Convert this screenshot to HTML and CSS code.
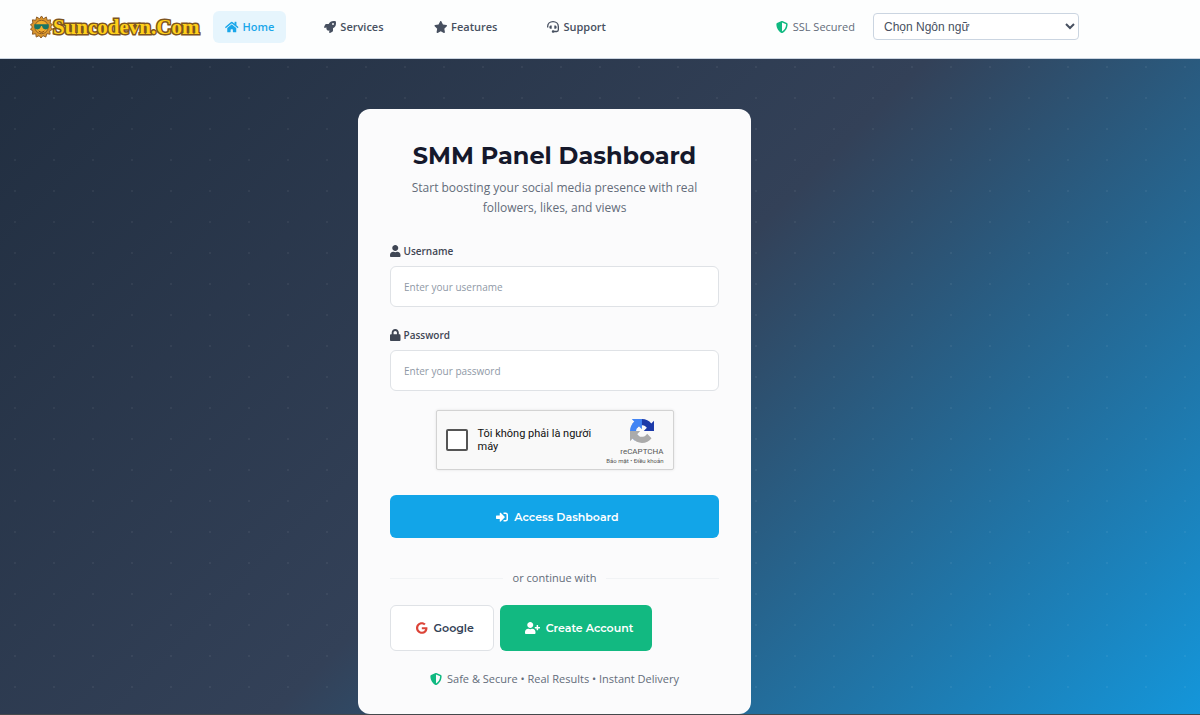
FILE: index.html
```html
<!DOCTYPE html>
<html lang="vi">
<head>
  <meta charset="UTF-8">
  <meta name="viewport" content="width=device-width, initial-scale=1.0">
  <title>SMM Panel Dashboard</title>
  <link rel="stylesheet" href="styles.css">
</head>
<body>
  <header class="header">
    <a class="logo" href="#">
      <svg class="logo-sun" viewBox="0 0 48 48" aria-hidden="true">
        <path d="M24 1l4 6 6-4 2 7 7-1-1 7 5 3-4 5 4 5-6 3 1 7-7-1-2 7-6-3-4 5-4-5-6 3-1-7-7 1 1-7-5-3 4-5-4-5 5-3-1-7 7 1 2-7 6 4z" fill="#d9952c" stroke="#8a5a26" stroke-width="2"/>
        <circle cx="24" cy="24" r="14" fill="#f3ae2d" stroke="#8a5a26" stroke-width="2"/>
        <path d="M9 18h30v5c0 4-3 6-7 6s-6-3-7-7h-2c-1 4-3 7-7 7s-7-2-7-6z" fill="#187565"/>
        <path d="M18 32c4 4 9 4 12 0" fill="none" stroke="#7a3c12" stroke-width="2"/>
      </svg>
      <span class="logo-text">Suncodevn.Com</span>
    </a>
    <nav class="nav">
      <a class="nav-link active" href="#">
        <svg class="icon" viewBox="0 0 576 512"><path d="M280.37 148.26L96 300.11V464a16 16 0 0 0 16 16l112.06-.29a16 16 0 0 0 15.92-16V368a16 16 0 0 1 16-16h64a16 16 0 0 1 16 16v95.64a16 16 0 0 0 16 16.05L464 480a16 16 0 0 0 16-16V300L295.67 148.26a12.19 12.19 0 0 0-15.3 0zM571.6 251.47L488 182.56V44.05a12 12 0 0 0-12-12h-56a12 12 0 0 0-12 12v72.61L318.47 43a48 48 0 0 0-61 0L4.34 251.47a12 12 0 0 0-1.6 16.9l25.5 31A12 12 0 0 0 45.15 301l235.22-193.74a12.19 12.19 0 0 1 15.3 0L530.9 301a12 12 0 0 0 16.9-1.6l25.5-31a12 12 0 0 0-1.7-16.93z"/></svg>
        Home
      </a>
      <a class="nav-link" href="#">
        <svg class="icon" viewBox="0 0 512 512"><path d="M505.1 19.1c-1.2-5.5-6.7-11-12.2-12.2C460.7 0 435.5 0 410.4 0 307.2 0 245.3 55.2 199.1 128H94.8c-16.3 0-35.6 11.9-42.9 26.5L2.5 253.3A28.4 28.4 0 0 0 0 264a24 24 0 0 0 24 24h103.8l-22.5 22.5c-11.4 11.4-13 32.3 0 45.3l50.9 50.9c11.2 11.2 32.2 13.2 45.3 0l22.5-22.5V488a24 24 0 0 0 24 24 28.6 28.6 0 0 0 10.7-2.5l98.7-49.4c14.6-7.3 26.5-26.5 26.5-42.9V312.8c72.6-46.3 128-108.4 128-211.1 0-25.2 0-50.4-6.8-82.6zM384 168a40 40 0 1 1 40-40 40 40 0 0 1-40 40z"/></svg>
        Services
      </a>
      <a class="nav-link" href="#">
        <svg class="icon" viewBox="0 0 576 512"><path d="M259.3 17.8L194 150.2 47.9 171.5c-26.2 3.8-36.7 36.1-17.7 54.6l105.7 103-25 145.5c-4.5 26.3 23.2 46 46.4 33.7L288 439.6l130.7 68.7c23.2 12.2 50.9-7.4 46.4-33.7l-25-145.5 105.7-103c19-18.5 8.5-50.8-17.7-54.6L382 150.2 316.7 17.8c-11.7-23.6-45.6-23.9-57.4 0z"/></svg>
        Features
      </a>
      <a class="nav-link" href="#">
        <svg class="icon" viewBox="0 0 512 512"><path d="M28 280v-40C28 120 128 28 256 28s228 92 228 212v136c0 44-30 72-70 72H280" fill="none" stroke="currentColor" stroke-width="56"/><path d="M200 190h-25c-45 0-75 28-75 72s30 72 75 72h25zM312 190h25c45 0 75 28 75 72s-30 72-75 72h-25z"/><rect x="205" y="396" width="110" height="108" rx="48"/></svg>
        Support
      </a>
    </nav>
    <div class="header-right">
      <span class="ssl">
        <svg class="icon green" viewBox="0 0 512 512"><path d="M466.5 83.7l-192-80a48.15 48.15 0 0 0-36.9 0l-192 80C27.7 91.1 16 108.6 16 128c0 198.5 114.5 335.7 221.5 380.3 11.8 4.9 25.1 4.9 36.9 0C360.1 472.6 496 349.3 496 128c0-19.4-11.7-36.9-29.5-44.3zM256.1 446.3l-.1-381 175.9 73.3c-3.3 151.4-82.1 261.1-175.8 307.7z"/></svg>
        SSL Secured
      </span>
      <select class="language" aria-label="Chọn Ngôn ngữ">
        <option>Chọn Ngôn ngữ</option>
      </select>
    </div>
  </header>

  <main class="hero">
    <form class="card">
      <h1 class="title">SMM Panel Dashboard</h1>
      <p class="subtitle">Start boosting your social media presence with real followers, likes, and views</p>

      <div class="form-group">
        <label for="username">
          <svg class="icon" viewBox="0 0 448 512"><path d="M224 256c70.7 0 128-57.3 128-128S294.7 0 224 0 96 57.3 96 128s57.3 128 128 128zm89.6 32h-16.7c-22.2 10.2-46.9 16-72.9 16s-50.6-5.8-72.9-16h-16.7C60.2 288 0 348.2 0 422.4V464c0 26.5 21.5 48 48 48h352c26.5 0 48-21.5 48-48v-41.6c0-74.2-60.2-134.4-134.4-134.4z"/></svg>
          Username
        </label>
        <input type="text" id="username" placeholder="Enter your username">
      </div>

      <div class="form-group">
        <label for="password">
          <svg class="icon" viewBox="0 0 448 512"><path d="M400 224h-24v-72C376 68.2 307.8 0 224 0S72 68.2 72 152v72H48c-26.5 0-48 21.5-48 48v192c0 26.5 21.5 48 48 48h352c26.5 0 48-21.5 48-48V272c0-26.5-21.5-48-48-48zm-104 0H152v-72c0-39.7 32.3-72 72-72s72 32.3 72 72v72z"/></svg>
          Password
        </label>
        <input type="password" id="password" placeholder="Enter your password">
      </div>

      <div class="captcha">
        <input type="checkbox" id="robot">
        <label for="robot">Tôi không phải là người máy</label>
        <div class="captcha-brand">
          <svg class="captcha-logo" viewBox="0 0 64 64" aria-hidden="true">
            <path fill="#1c3aa9" d="M64 31.955l-.033-1.37V4.687l-7.16 7.16C50.948 4.674 42.033.093 32.05.093c-10.4 0-19.622 4.96-25.458 12.64l11.736 11.86a15.55 15.55 0 0 1 4.754-5.334c2.05-1.6 4.952-2.906 8.968-2.906.485 0 .86.057 1.135.163 4.976.393 9.288 3.14 11.828 7.124l-8.307 8.307L64 31.953"/>
            <path fill="#4285f4" d="M31.862.094l-1.37.033H4.594l7.16 7.16C4.58 13.147 0 22.06 0 32.046c0 10.4 4.96 19.622 12.64 25.458L24.5 45.768a15.55 15.55 0 0 1-5.334-4.754c-1.6-2.05-2.906-4.952-2.906-8.968 0-.485.057-.86.163-1.135.393-4.976 3.14-9.288 7.124-11.828l8.307 8.307L31.86.095"/>
            <path fill="#ababab" d="M.001 32.045l.033 1.37v25.898l7.16-7.16c5.86 7.173 14.774 11.754 24.76 11.754 10.4 0 19.622-4.96 25.458-12.64l-11.736-11.86a15.55 15.55 0 0 1-4.754 5.334c-2.05 1.6-4.952 2.906-8.968 2.906-.485 0-.86-.057-1.135-.163-4.976-.393-9.288-3.14-11.828-7.124l8.307-8.307c-10.522.04-22.4.066-27.295-.005"/>
          </svg>
          <span class="captcha-name">reCAPTCHA</span>
          <span class="captcha-links"><a href="#">Bảo mật</a> • <a href="#">Điều khoản</a></span>
        </div>
      </div>

      <button class="btn btn-primary" type="submit">
        <svg class="icon" viewBox="0 0 512 512"><path d="M416 448h-84c-6.6 0-12-5.4-12-12v-40c0-6.6 5.4-12 12-12h84c17.7 0 32-14.3 32-32V160c0-17.7-14.3-32-32-32h-84c-6.6 0-12-5.4-12-12V76c0-6.6 5.4-12 12-12h84c53 0 96 43 96 96v192c0 53-43 96-96 96zm-47-201L201 79c-15-15-41-4.5-41 17v96H24c-13.3 0-24 10.7-24 24v96c0 13.3 10.7 24 24 24h136v96c0 21.5 26 32 41 17l168-168c9.3-9.4 9.3-24.6 0-34z"/></svg>
        Access Dashboard
      </button>

      <div class="divider">or continue with</div>

      <div class="actions">
        <button class="btn btn-google" type="button">
          <svg class="icon" viewBox="0 0 488 512"><path d="M488 261.8C488 403.3 391.1 504 248 504 110.8 504 0 393.2 0 256S110.8 8 248 8c66.8 0 123 24.5 166.3 64.9l-67.5 64.9C258.5 52.6 94.3 116.6 94.3 256c0 86.5 69.1 156.6 153.7 156.6 98.2 0 135-70.4 140.8-106.9H248v-85.3h236.1c2.3 12.7 3.9 24.9 3.9 41.4z"/></svg>
          Google
        </button>
        <button class="btn btn-create" type="button">
          <svg class="icon" viewBox="0 0 640 512"><path d="M624 208h-64v-64c0-8.8-7.2-16-16-16h-32c-8.8 0-16 7.2-16 16v64h-64c-8.8 0-16 7.2-16 16v32c0 8.8 7.2 16 16 16h64v64c0 8.8 7.2 16 16 16h32c8.8 0 16-7.2 16-16v-64h64c8.8 0 16-7.2 16-16v-32c0-8.8-7.2-16-16-16zm-400 48c70.7 0 128-57.3 128-128S294.7 0 224 0 96 57.3 96 128s57.3 128 128 128zm89.6 32h-16.7c-22.2 10.2-46.9 16-72.9 16s-50.6-5.8-72.9-16h-16.7C60.2 288 0 348.2 0 422.4V464c0 26.5 21.5 48 48 48h352c26.5 0 48-21.5 48-48v-41.6c0-74.2-60.2-134.4-134.4-134.4z"/></svg>
          Create Account
        </button>
      </div>

      <p class="trust">
        <svg class="icon green" viewBox="0 0 512 512"><path d="M466.5 83.7l-192-80a48.15 48.15 0 0 0-36.9 0l-192 80C27.7 91.1 16 108.6 16 128c0 198.5 114.5 335.7 221.5 380.3 11.8 4.9 25.1 4.9 36.9 0C360.1 472.6 496 349.3 496 128c0-19.4-11.7-36.9-29.5-44.3zM256.1 446.3l-.1-381 175.9 73.3c-3.3 151.4-82.1 261.1-175.8 307.7z"/></svg>
        Safe &amp; Secure • Real Results • Instant Delivery
      </p>
    </form>
  </main>
</body>
</html>
```
FILE: styles.css
```css
* {
  box-sizing: border-box;
}

body {
  margin: 0;
  min-height: 100vh;
  display: flex;
  flex-direction: column;
  font-family: "Open Sans", sans-serif;
  font-size: 11px;
  color: #636c7a;
}

a {
  color: inherit;
  text-decoration: none;
}

.icon {
  height: 12px;
  fill: currentColor;
  flex: none;
}

.green {
  color: #10b981;
}

/* header */
.header {
  display: flex;
  align-items: center;
  height: 59px;
  padding: 0 121px 5px 30px;
  background: #fdfefe;
  border-bottom: 1px solid #cbd5e1;
}

.logo {
  display: flex;
  align-items: center;
  width: 170px;
  margin-right: 13px;
}

.logo-sun {
  width: 23px;
  height: 24px;
  flex: none;
}

.logo-text {
  font-family: "Liberation Serif", serif;
  font-size: 21px;
  font-weight: bold;
  line-height: 24px;
  color: #ffd01a;
  -webkit-text-stroke: 3px #7d551f;
  paint-order: stroke fill;
}

.nav {
  display: flex;
  gap: 26px;
}

.nav-link {
  display: flex;
  align-items: center;
  gap: 4px;
  height: 32px;
  padding: 0 12px;
  border-radius: 6px;
  font-weight: 600;
  color: #475060;
}

.nav-link.active {
  background: #e6f5fd;
  color: #1aa7ea;
}

.header-right {
  display: flex;
  align-items: center;
  gap: 18px;
  margin-left: auto;
}

.ssl {
  display: flex;
  align-items: center;
  gap: 5px;
}

.language {
  width: 206px;
  height: 27px;
  padding: 0 6px;
  border: 1px solid #cbd5e1;
  border-radius: 4px;
  background: #fff;
  color: #475060;
  font-family: "Liberation Sans", sans-serif;
  font-size: 12px;
}

/* login */
.hero {
  flex: 1;
  display: flex;
  justify-content: center;
  align-items: flex-start;
  padding: 50px 91px 0 0;
  border-bottom: 1px solid #45484c;
  background:
    radial-gradient(circle at 15px 8px, rgba(255, 255, 255, 0.05) 1px, transparent 1px) 0 0 / 39px 31px,
    linear-gradient(135deg, #212e40 0%, #334158 50%, #1496da 100%);
}

.card {
  width: 393px;
  padding: 32px 32px 25px;
  border-radius: 12px;
  background: #fbfbfc;
}

.title {
  margin: 0 0 7px;
  font-family: Montserrat, Inter, sans-serif;
  font-size: 24px;
  font-weight: 700;
  line-height: 30px;
  text-align: center;
  color: #15182b;
}

.subtitle {
  margin: 0 0 24px;
  padding: 0 16px;
  font-size: 12px;
  line-height: 20px;
  text-align: center;
}

.form-group {
  margin-bottom: 19px;
}

.form-group label {
  display: flex;
  align-items: center;
  gap: 3px;
  margin-bottom: 6px;
  font-size: 10px;
  font-weight: 600;
  line-height: 18px;
  color: #3f4654;
}

.form-group input {
  width: 100%;
  height: 41px;
  padding: 0 13px;
  border: 1px solid #dfe2e6;
  border-radius: 6px;
  background: #fff;
  font-family: inherit;
  font-size: 10px;
}

.form-group input::placeholder {
  color: #8f99a6;
}

.captcha {
  display: flex;
  align-items: center;
  width: 238px;
  height: 60px;
  margin: 0 auto 25px;
  padding: 0 9px;
  border: 1px solid #d3d3d3;
  border-radius: 2px;
  background: #f9f9f9;
  box-shadow: 0 0 3px rgba(0, 0, 0, 0.1);
}

.captcha input {
  appearance: none;
  flex: none;
  width: 22px;
  height: 22px;
  margin: 0 10px 0 0;
  border: 2px solid #555;
  border-radius: 2px;
  background: #fff;
}

.captcha label {
  flex: 1;
  font-family: Roboto, sans-serif;
  font-size: 11px;
  line-height: 13px;
  color: #111;
}

.captcha-brand {
  display: flex;
  flex-direction: column;
  align-items: flex-end;
  font-family: Roboto, sans-serif;
  color: #555;
}

.captcha-logo {
  width: 24px;
  height: 24px;
  margin: 4px 10px 3px 0;
}

.captcha-name {
  font-size: 8px;
  line-height: 11px;
}

.captcha-links {
  font-size: 6px;
  line-height: 8px;
}

.btn {
  display: flex;
  align-items: center;
  justify-content: center;
  gap: 6px;
  padding: 0 18px 0 24px;
  border: 0;
  border-radius: 6px;
  font-family: Montserrat, Inter, sans-serif;
  font-size: 11px;
  font-weight: 600;
  color: #fff;
}

.btn-primary {
  width: 100%;
  height: 43px;
  background: #12a5e8;
}

.divider {
  display: flex;
  align-items: center;
  gap: 10px;
  margin: 30px 0 17px;
  line-height: 20px;
}

.divider::before,
.divider::after {
  content: "";
  flex: 1;
  border-top: 1px solid #f1f3f5;
}

.actions {
  display: flex;
  gap: 6px;
  margin-bottom: 18px;
}

.actions .btn {
  height: 46px;
}

.btn-google {
  width: 104px;
  border: 1px solid #dfe2e6;
  background: #fff;
  color: #334155;
}

.btn-google .icon {
  color: #dc4438;
}

.btn-create {
  width: 152px;
  background: #12b981;
}

.trust {
  display: flex;
  align-items: center;
  justify-content: center;
  gap: 5px;
  margin: 0;
  line-height: 20px;
}
```
